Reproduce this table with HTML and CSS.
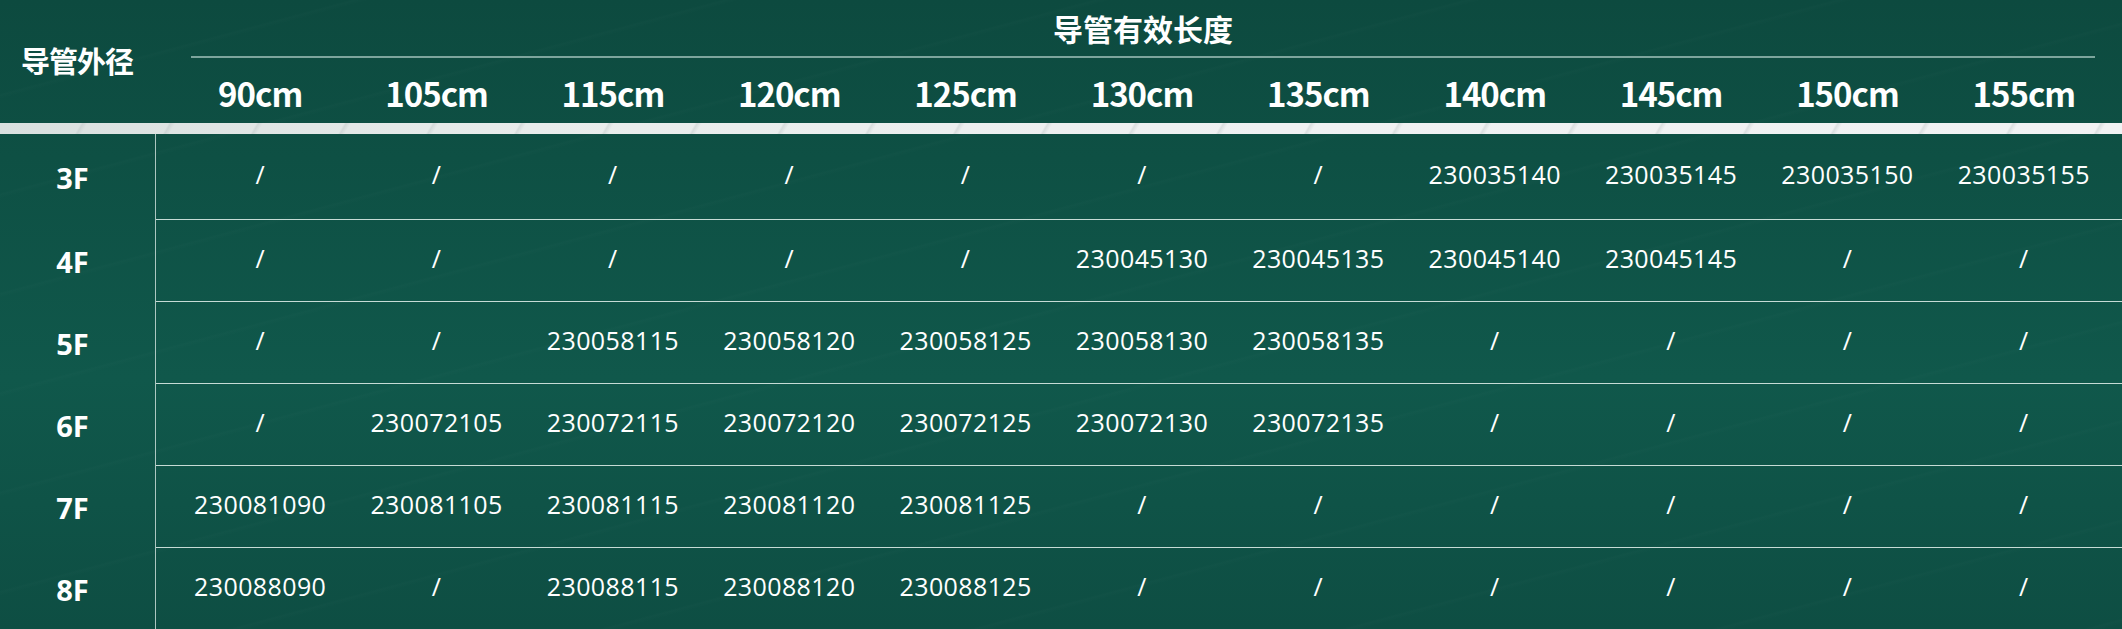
FILE: index.html
```html
<!DOCTYPE html>
<html lang="zh-CN">
<head>
<meta charset="utf-8">
<title>导管规格表</title>
<link rel="stylesheet" href="styles.css">
</head>
<body>
<div class="sheet">
  <div class="thead">
    <div class="corner">导管外径</div>
    <div class="head-right">
      <div class="group-title">导管有效长度</div>
      <div class="len-row">
        <div>90cm</div><div>105cm</div><div>115cm</div><div>120cm</div><div>125cm</div><div>130cm</div><div>135cm</div><div>140cm</div><div>145cm</div><div>150cm</div><div>155cm</div>
      </div>
    </div>
  </div>
  <div class="bar"></div>
  <div class="tbody">
    <div class="row first">
      <div class="label">3F</div>
      <div class="cells">
        <div>/</div><div>/</div><div>/</div><div>/</div><div>/</div><div>/</div><div>/</div><div>230035140</div><div>230035145</div><div>230035150</div><div>230035155</div>
      </div>
    </div>
    <div class="row">
      <div class="label">4F</div>
      <div class="cells">
        <div>/</div><div>/</div><div>/</div><div>/</div><div>/</div><div>230045130</div><div>230045135</div><div>230045140</div><div>230045145</div><div>/</div><div>/</div>
      </div>
    </div>
    <div class="row">
      <div class="label">5F</div>
      <div class="cells">
        <div>/</div><div>/</div><div>230058115</div><div>230058120</div><div>230058125</div><div>230058130</div><div>230058135</div><div>/</div><div>/</div><div>/</div><div>/</div>
      </div>
    </div>
    <div class="row">
      <div class="label">6F</div>
      <div class="cells">
        <div>/</div><div>230072105</div><div>230072115</div><div>230072120</div><div>230072125</div><div>230072130</div><div>230072135</div><div>/</div><div>/</div><div>/</div><div>/</div>
      </div>
    </div>
    <div class="row">
      <div class="label">7F</div>
      <div class="cells">
        <div>230081090</div><div>230081105</div><div>230081115</div><div>230081120</div><div>230081125</div><div>/</div><div>/</div><div>/</div><div>/</div><div>/</div><div>/</div>
      </div>
    </div>
    <div class="row last">
      <div class="label">8F</div>
      <div class="cells">
        <div>230088090</div><div>/</div><div>230088115</div><div>230088120</div><div>230088125</div><div>/</div><div>/</div><div>/</div><div>/</div><div>/</div><div>/</div>
      </div>
    </div>
  </div>
</div>
</body>
</html>
```
FILE: styles.css
```css
html, body {
  margin: 0;
  padding: 0;
}
body {
  width: 2122px;
  height: 629px;
  overflow: hidden;
  color: #ffffff;
  font-family: "Noto Sans CJK SC", "Noto Sans", sans-serif;
  background:
    repeating-linear-gradient(165deg, rgba(255,255,255,0) 0px, rgba(255,255,255,0) 90px, rgba(255,255,255,0.012) 92px, rgba(255,255,255,0) 96px),
    linear-gradient(180deg, #0d4a3f 0%, #0e5044 25%, #10584b 60%, #0e4e43 100%);
}
.sheet {
  display: flex;
  flex-direction: column;
  width: 2122px;
}
.thead {
  display: flex;
  height: 123px;
}
.corner {
  width: 156px;
  flex: none;
  display: flex;
  align-items: center;
  justify-content: center;
  padding-right: 2px;
  padding-bottom: 4px;
  box-sizing: border-box;
  font-size: 29px;
  font-weight: 700;
  letter-spacing: -1px;
}
.head-right {
  flex: 1;
  display: flex;
  flex-direction: column;
  padding: 0 10px 0 16px;
}
.group-title {
  height: 58px;
  margin: 0 17px 0 19px;
  border-bottom: 2px solid rgba(200, 225, 218, 0.6);
  display: flex;
  align-items: center;
  justify-content: center;
  font-size: 30px;
  font-weight: 700;
  line-height: 1;
  padding-top: 4px;
  padding-bottom: 4px;
  box-sizing: border-box;
}
.len-row {
  flex: 1;
  display: grid;
  grid-template-columns: repeat(11, 1fr);
  align-items: center;
  padding-top: 5px;
  font-size: 33px;
  font-weight: 700;
  letter-spacing: -1px;
}
.len-row > div {
  text-align: center;
}
.bar {
  height: 11px;
  background:
    repeating-linear-gradient(120deg, rgba(255,255,255,0) 0px, rgba(255,255,255,0) 70px, rgba(180,190,190,0.35) 72px, rgba(255,255,255,0) 76px),
    linear-gradient(90deg, #d9e0df 0%, #e8eceb 25%, #eff1f2 60%, #f1f2f3 100%);
}
.tbody {
  display: flex;
  flex-direction: column;
}
.row {
  display: flex;
  height: 82px;
}
.row.first {
  height: 86px;
}
.label {
  width: 156px;
  flex: none;
  box-sizing: border-box;
  border-right: 1.5px solid rgba(225, 238, 234, 0.75);
  display: flex;
  align-items: center;
  justify-content: center;
  padding-right: 10px;
  font-family: "Noto Sans", sans-serif;
  font-size: 29px;
  font-weight: 700;
}
.cells {
  flex: 1;
  display: grid;
  grid-template-columns: repeat(11, 1fr);
  align-items: center;
  padding: 0 10px 6px 16px;
  border-bottom: 1.5px solid rgba(230, 243, 239, 0.85);
  font-family: "Open Sans", "Noto Sans", sans-serif;
  font-size: 25px;
  font-weight: 400;
  letter-spacing: 0.4px;
}
.row.last .cells {
  border-bottom: none;
}
.cells > div {
  text-align: center;
}
```
